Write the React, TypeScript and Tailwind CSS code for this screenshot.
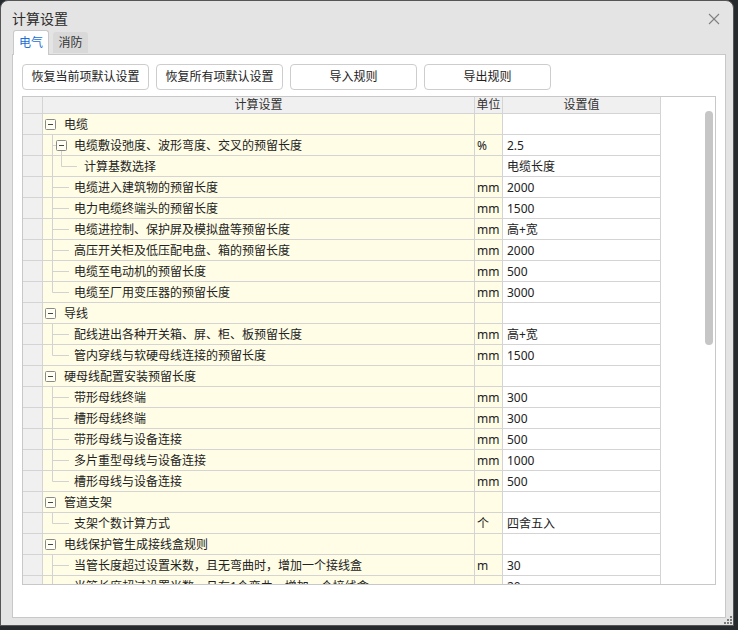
import React from 'react';

type Row = {
    t: string;
    u?: string;
    v?: string;
    lv: 0 | 1 | 2;
    box?: boolean;
    last?: boolean;
};

const rows: Row[] = [
    { t: '电缆', lv: 0, box: true },
    { t: '电缆敷设弛度、波形弯度、交叉的预留长度', u: '%', v: '2.5', lv: 1, box: true },
    { t: '计算基数选择', v: '电缆长度', lv: 2, last: true },
    { t: '电缆进入建筑物的预留长度', u: 'mm', v: '2000', lv: 1 },
    { t: '电力电缆终端头的预留长度', u: 'mm', v: '1500', lv: 1 },
    { t: '电缆进控制、保护屏及模拟盘等预留长度', u: 'mm', v: '高+宽', lv: 1 },
    { t: '高压开关柜及低压配电盘、箱的预留长度', u: 'mm', v: '2000', lv: 1 },
    { t: '电缆至电动机的预留长度', u: 'mm', v: '500', lv: 1 },
    { t: '电缆至厂用变压器的预留长度', u: 'mm', v: '3000', lv: 1, last: true },
    { t: '导线', lv: 0, box: true },
    { t: '配线进出各种开关箱、屏、柜、板预留长度', u: 'mm', v: '高+宽', lv: 1 },
    { t: '管内穿线与软硬母线连接的预留长度', u: 'mm', v: '1500', lv: 1, last: true },
    { t: '硬母线配置安装预留长度', lv: 0, box: true },
    { t: '带形母线终端', u: 'mm', v: '300', lv: 1 },
    { t: '槽形母线终端', u: 'mm', v: '300', lv: 1 },
    { t: '带形母线与设备连接', u: 'mm', v: '500', lv: 1 },
    { t: '多片重型母线与设备连接', u: 'mm', v: '1000', lv: 1 },
    { t: '槽形母线与设备连接', u: 'mm', v: '500', lv: 1, last: true },
    { t: '管道支架', lv: 0, box: true },
    { t: '支架个数计算方式', u: '个', v: '四舍五入', lv: 1, last: true },
    { t: '电线保护管生成接线盒规则', lv: 0, box: true },
    { t: '当管长度超过设置米数，且无弯曲时，增加一个接线盒', u: 'm', v: '30', lv: 1 },
    { t: '当管长度超过设置米数，且有1个弯曲，增加一个接线盒', u: 'm', v: '20', lv: 1 },
];

const LINE = '#d2d2d2';

const ExpandBox: React.FC<{ x: number }> = ({ x }) => (
    <g>
        <rect x={x + 0.5} y={5.5} width={10} height={10} rx={1} fill="#fffef2" stroke="#8a8a8a" />
        <line x1={x + 3} y1={10.5} x2={x + 8} y2={10.5} stroke="#444" />
    </g>
);

// tree connector lines for one name cell
const TreeLines: React.FC<{ row: Row }> = ({ row }) => {
    const { lv, box, last } = row;
    return (
        <svg className="absolute left-0 top-0" width="44" height="20" viewBox="0 0 44 20">
            {lv === 0 && <ExpandBox x={2} />}
            {lv === 1 && (
                <>
                    <line x1={9.5} y1={0} x2={9.5} y2={last ? 10.5 : 20} stroke={LINE} />
                    <line x1={9.5} y1={10.5} x2={box ? 13 : 26} y2={10.5} stroke={LINE} />
                    {box && (
                        <>
                            <line x1={18.5} y1={16} x2={18.5} y2={20} stroke={LINE} />
                            <ExpandBox x={13} />
                        </>
                    )}
                </>
            )}
            {lv === 2 && (
                <>
                    <line x1={9.5} y1={0} x2={9.5} y2={20} stroke={LINE} />
                    <line x1={18.5} y1={0} x2={18.5} y2={last ? 10.5 : 20} stroke={LINE} />
                    <line x1={18.5} y1={10.5} x2={34} y2={10.5} stroke={LINE} />
                </>
            )}
        </svg>
    );
};

const textPad = (r: Row) => (r.lv === 0 ? 'pl-[21px]' : r.lv === 1 ? 'pl-[31px]' : 'pl-[41px]');

const App: React.FC = () => {
    const buttons = ['恢复当前项默认设置', '恢复所有项默认设置', '导入规则', '导出规则'];

    return (
        <div
            className="w-[738px] h-[630px] bg-[#262a2d] overflow-hidden text-[#222]"
            style={{ fontFamily: '"Noto Sans", "Noto Sans CJK SC", sans-serif' }}
        >
            <div className="relative w-[734px] h-[626px] bg-[#e4e4e4] rounded-t-[8px] border border-[#555] flex flex-col">
                {/* title bar */}
                <div className="h-[29px] flex items-center justify-between pl-[11px] pr-[13px] pt-[6px]">
                    <span className="text-[14px] leading-[20px] text-[#2b2b2b]">计算设置</span>
                    <svg width="12" height="12" viewBox="0 0 12 12">
                        <line x1="1" y1="1" x2="11" y2="11" stroke="#808080" strokeWidth="1.1" />
                        <line x1="11" y1="1" x2="1" y2="11" stroke="#808080" strokeWidth="1.1" />
                    </svg>
                </div>

                {/* tabs */}
                <div className="flex items-end h-[24px] pl-[12px] gap-[4px] relative z-10">
                    <div className="w-[36px] h-[25px] -mb-[1px] bg-white border border-b-0 border-[#c8c8c8] rounded-t-[3px] flex items-center justify-center text-[12px] text-[#1c6fd6]">
                        电气
                    </div>
                    <div className="w-[35px] h-[21px] mb-[1px] bg-[#d9d9d9] rounded-t-[3px] flex items-center justify-center text-[12px] text-[#333]">
                        消防
                    </div>
                </div>

                {/* panel */}
                <div className="ml-[11px] w-[714px] h-[564px] bg-white border border-[#c8c8c8] pt-[9px] pl-[9px]">
                    <div className="flex gap-[7px]">
                        {buttons.map((b) => (
                            <button
                                key={b}
                                className="w-[127px] h-[26px] bg-white border border-[#cdcdcd] rounded-[4px] text-[12px] text-[#222] flex items-center justify-center"
                            >
                                {b}
                            </button>
                        ))}
                    </div>

                    {/* property grid */}
                    <div className="mt-[6px] w-[694px] h-[489px] border border-[#c8c8c8] flex overflow-hidden text-[12px]">
                        <div className="w-[638px] flex flex-col">
                            <div className="h-[17px] shrink-0 flex border-b border-[#d4d4d4] bg-[#f0f0f0] leading-[16px] text-[#333]">
                                <div className="w-[20px] border-r border-[#d4d4d4]" />
                                <div className="w-[432px] border-r border-[#d4d4d4] text-center">计算设置</div>
                                <div className="w-[28px] border-r border-[#d4d4d4] text-center">单位</div>
                                <div className="w-[158px] border-r border-[#d4d4d4] text-center">设置值</div>
                            </div>
                            {rows.map((r, i) => (
                                <div key={i} className="h-[21px] shrink-0 flex border-b border-[#d4d4d4] leading-[20px]">
                                    <div className="w-[20px] border-r border-[#d4d4d4] bg-[#f0f0f0]" />
                                    <div className={`relative w-[432px] border-r border-[#d4d4d4] bg-[#fffde6] whitespace-nowrap pt-[1px] ${textPad(r)}`}>
                                        <TreeLines row={r} />
                                        <span className="relative">{r.t}</span>
                                    </div>
                                    <div className="w-[28px] border-r border-[#d4d4d4] bg-[#fffde6] pl-[2px] pt-[1px] whitespace-nowrap">
                                        {r.u}
                                    </div>
                                    <div className="w-[158px] border-r border-[#d4d4d4] pl-[4px] pt-[1px] whitespace-nowrap">{r.v}</div>
                                </div>
                            ))}
                        </div>
                        <div className="flex-1 flex justify-end pr-[2px] pt-[14px]">
                            <div className="w-[8px] h-[234px] rounded-full bg-[#c6c6c6]" />
                        </div>
                    </div>
                </div>

                {/* resize grip */}
                <svg className="absolute right-[1px] bottom-[1px]" width="8" height="8" viewBox="0 0 8 8">
                    <rect x="6" y="0" width="2" height="2" fill="#7a7a7a" />
                    <rect x="3" y="3" width="2" height="2" fill="#7a7a7a" />
                    <rect x="6" y="3" width="2" height="2" fill="#7a7a7a" />
                    <rect x="0" y="6" width="2" height="2" fill="#7a7a7a" />
                    <rect x="3" y="6" width="2" height="2" fill="#7a7a7a" />
                    <rect x="6" y="6" width="2" height="2" fill="#7a7a7a" />
                </svg>
            </div>
        </div>
    );
};

export default App;
